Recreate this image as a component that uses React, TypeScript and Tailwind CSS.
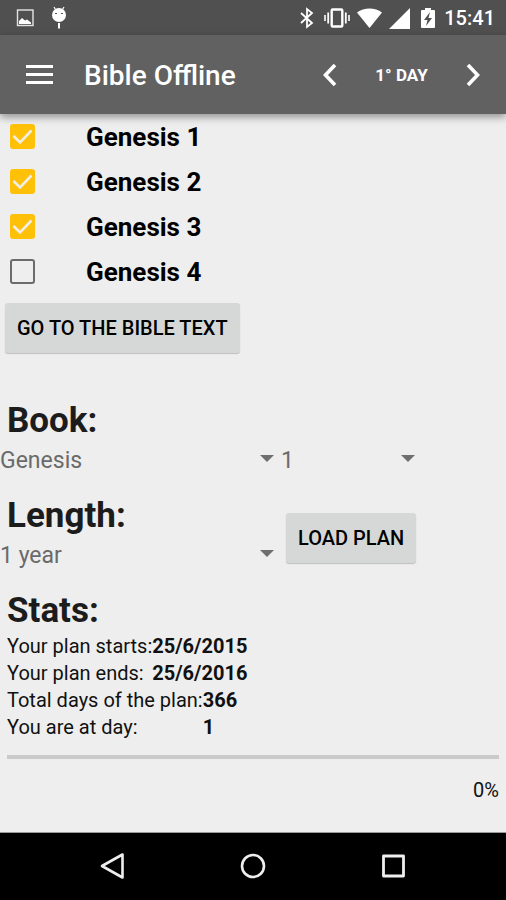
import { useState, type ReactNode } from "react";

const chapters = ["Genesis 1", "Genesis 2", "Genesis 3", "Genesis 4"];

function StatusBar() {
  return (
    <div className="flex h-[35px] items-center justify-between bg-[#505050] pr-[11px] pl-4 text-white">
      <div className="flex items-center gap-[17px]">
        <svg className="h-[18px] w-[18px]" viewBox="0 0 18 18" aria-hidden="true">
          <rect x="1.500" y="1" width="15.500" height="15.500" fill="none" stroke="#e4e4e4" strokeWidth="1.400" />
          <path d="M3 15v-3l3-3 3 2.500 2-1 4 3V15z" fill="#fff" />
        </svg>
        <svg className="h-[23px] w-4" viewBox="0 0 16 23" aria-hidden="true">
          <path d="M3 1l1.500 2.500M13 1l-1.500 2.500" stroke="#fff" strokeWidth="1.200" />
          <circle cx="8" cy="9" r="7" fill="#fff" />
          <rect x="7" y="17" width="2" height="5.500" fill="#fff" />
          <path d="M4 7.500h2M10 7.500h2" stroke="#555" strokeWidth="1.200" />
        </svg>
      </div>
      <div className="flex items-center">
        <svg className="mr-[10px] h-[22px] w-[14px]" viewBox="0 0 14 22" fill="none" stroke="#fff" strokeWidth="1.800" aria-hidden="true">
          <path d="M1 6l11 10-5 4V2l5 4L1 16" />
        </svg>
        <svg className="mr-[7px] h-[22px] w-[26px]" viewBox="0 0 26 22" fill="none" stroke="#fff" aria-hidden="true">
          <rect x="7.700" y="2.500" width="10.600" height="17" rx="1" strokeWidth="2.400" />
          <path d="M4.200 5.500v11M21.800 5.500v11" strokeWidth="1.800" />
          <path d="M1 8v6M25 8v6" strokeWidth="1.600" />
        </svg>
        <svg className="mr-[7px] h-[22px] w-[25px]" viewBox="0 0 25 22" fill="#fff" aria-hidden="true">
          <path d="M0 5.500C7 .2 18 .2 25 5.500L12.500 21z" />
        </svg>
        <svg className="mr-[11px] h-[22px] w-[21px]" viewBox="0 0 21 22" fill="#fff" aria-hidden="true">
          <path d="M21 1v21H0z" />
        </svg>
        <svg className="mr-[9px] h-[22px] w-[14px]" viewBox="0 0 14 22" aria-hidden="true">
          <path d="M4 1h6v2h3q1 0 1 1v16q0 1-1 1H1q-1 0-1-1V4q0-1 1-1h3z" fill="#fff" />
          <path d="M9 5L3 13h3.500L5 19l6-8H7.500z" fill="#505050" />
        </svg>
        <span className="pt-px text-xl/6 font-medium">15:41</span>
      </div>
    </div>
  );
}

function Chevron({ label, d, onClick }: { label: string; d: string; onClick: () => void }) {
  return (
    <button type="button" aria-label={label} onClick={onClick} className="flex h-12 w-[26px] items-center justify-center">
      <svg className="h-6 w-[14px]" viewBox="0 0 14 24" fill="none" stroke="#fff" strokeWidth="3.600" aria-hidden="true">
        <path d={d} />
      </svg>
    </button>
  );
}

function Toolbar() {
  const [day, setDay] = useState(1);
  return (
    <header className="relative z-10 flex h-[79px] items-center bg-[#616161] pr-5 pl-[26px] text-white shadow-[0_3px_8px_rgba(0,0,0,0.4)]">
      <button type="button" aria-label="Menu" className="mr-[31px] flex h-12 w-[27px] flex-col justify-center gap-[5px]">
        <span className="h-[3px] w-full bg-white" />
        <span className="h-[3px] w-full bg-white" />
        <span className="h-[3px] w-full bg-white" />
      </button>
      <h1 className="pt-[2px] text-[28px]/8 font-medium">Bible Offline</h1>
      <div className="ml-auto flex items-center">
        <Chevron label="Previous day" d="M12 2L2.500 12 12 22" onClick={() => setDay(Math.max(1, day - 1))} />
        <span className="w-[117px] text-center text-[17px]/6 font-bold">{day}° DAY</span>
        <Chevron label="Next day" d="M2 2l9.500 10L2 22" onClick={() => setDay(day + 1)} />
      </div>
    </header>
  );
}

function ChapterRow({ name, initial }: { name: string; initial: boolean }) {
  const [checked, setChecked] = useState(initial);
  return (
    <li>
      <label className="flex h-[45px] items-center pl-[10px] text-[26px]/8 font-bold text-black">
        <span className="mr-[51px] grid h-[25px] w-[25px]">
          <input
            type="checkbox"
            checked={checked}
            onChange={(e) => setChecked(e.target.checked)}
            className="col-start-1 row-start-1 h-[25px] w-[25px] appearance-none rounded-[3px] border-2 border-[#6b6b6b] checked:border-[#ffc107] checked:bg-[#ffc107]"
          />
          {checked && (
            <svg className="pointer-events-none col-start-1 row-start-1 h-[25px] w-[25px]" viewBox="0 0 25 25" fill="none" stroke="#f0eee6" strokeWidth="2.600" aria-hidden="true">
              <path d="M3.500 12L10 18.500 21.500 6.500" />
            </svg>
          )}
        </span>
        {name}
      </label>
    </li>
  );
}

function Spinner({ label, options, className }: { label: string; options: string[]; className: string }) {
  return (
    <div className={`grid items-center ${className}`}>
      <select
        aria-label={label}
        className="col-start-1 row-start-1 h-[38px] w-full appearance-none bg-transparent text-[23px]/8 text-[#6a6a6a]"
      >
        {options.map((o) => (
          <option key={o}>{o}</option>
        ))}
      </select>
      <svg className="pointer-events-none col-start-1 row-start-1 mr-[7px] mb-[5px] h-[7px] w-[14px] justify-self-end" viewBox="0 0 14 7" fill="#6e6e6e" aria-hidden="true">
        <path d="M0 0h14L7 7z" />
      </svg>
    </div>
  );
}

function RaisedButton({ children }: { children: ReactNode }) {
  return (
    <button type="button" className="h-[50px] rounded-[3px] bg-[#d6d8d7] px-3 text-xl/6 font-medium whitespace-nowrap text-black shadow-[0_1px_1px_rgba(0,0,0,0.2)]">
      {children}
    </button>
  );
}

function Heading({ children }: { children: ReactNode }) {
  return <h2 className="pl-[7px] text-[35px]/[42px] font-bold text-[#1c1c1c]">{children}</h2>;
}

function StatList({ rows }: { rows: [string, string][] }) {
  return (
    <dl className="grid grid-cols-[auto_auto] justify-start pl-[7px] text-xl/[27px] text-[#111]">
      {rows.map(([term, value]) => (
        <div key={term} className="contents">
          <dt>{term}</dt>
          <dd className="font-bold">{value}</dd>
        </div>
      ))}
    </dl>
  );
}

function NavigationBar() {
  return (
    <nav className="flex h-[68px] items-center justify-center gap-[112px] border-t border-[#999] bg-black pb-px">
      <button type="button" aria-label="Back">
        <svg className="h-7 w-7" viewBox="0 0 28 28" fill="none" stroke="#eee" strokeWidth="2.600" strokeLinejoin="round" aria-hidden="true">
          <path d="M23.500 2.500v23L3 14z" />
        </svg>
      </button>
      <button type="button" aria-label="Home">
        <svg className="h-7 w-7" viewBox="0 0 28 28" fill="none" stroke="#eee" strokeWidth="2.600" aria-hidden="true">
          <circle cx="14" cy="14" r="11" />
        </svg>
      </button>
      <button type="button" aria-label="Recent apps">
        <svg className="h-7 w-7" viewBox="0 0 28 28" fill="none" stroke="#eee" strokeWidth="2.800" strokeLinejoin="round" aria-hidden="true">
          <rect x="4.500" y="4" width="20" height="20" />
        </svg>
      </button>
    </nav>
  );
}

export default function App() {
  return (
    <div className="flex min-h-screen flex-col bg-[#eee] font-[Roboto,sans-serif]">
      <StatusBar />
      <Toolbar />
      <main className="flex-1">
        <ul>
          {chapters.map((name, i) => (
            <ChapterRow key={name} name={name} initial={i < 3} />
          ))}
        </ul>
        <div className="px-[5px] pt-[9px]">
          <RaisedButton>GO TO THE BIBLE TEXT</RaisedButton>
        </div>

        <section className="mt-[47px]">
          <Heading>Book:</Heading>
          <div className="flex">
            <Spinner label="Book" options={["Genesis", "Exodus", "Leviticus"]} className="w-[281px]" />
            <Spinner label="Chapter" options={["1", "2", "3"]} className="w-[141px]" />
          </div>
        </section>

        <section className="mt-[15px] flex items-end">
          <div>
            <Heading>Length:</Heading>
            <Spinner label="Length" options={["1 year", "2 years"]} className="w-[281px]" />
          </div>
          <div className="mb-3 ml-[5px]">
            <RaisedButton>LOAD PLAN</RaisedButton>
          </div>
        </section>

        <section className="mt-[15px]">
          <Heading>Stats:</Heading>
          <div className="mt-px">
            <StatList rows={[["Your plan starts:", "25/6/2015"], ["Your plan ends:", "25/6/2016"]]} />
            <StatList rows={[["Total days of the plan:", "366"], ["You are at day:", "1"]]} />
          </div>
          <div className="mx-[7px] mt-[14px]">
            <div role="progressbar" aria-label="Plan progress" aria-valuenow={0} aria-valuemin={0} aria-valuemax={100} className="h-1 bg-[#cacaca]" />
            <p className="mt-[18px] text-right text-xl/[27px] text-[#111]">0%</p>
          </div>
        </section>
      </main>
      <NavigationBar />
    </div>
  );
}
